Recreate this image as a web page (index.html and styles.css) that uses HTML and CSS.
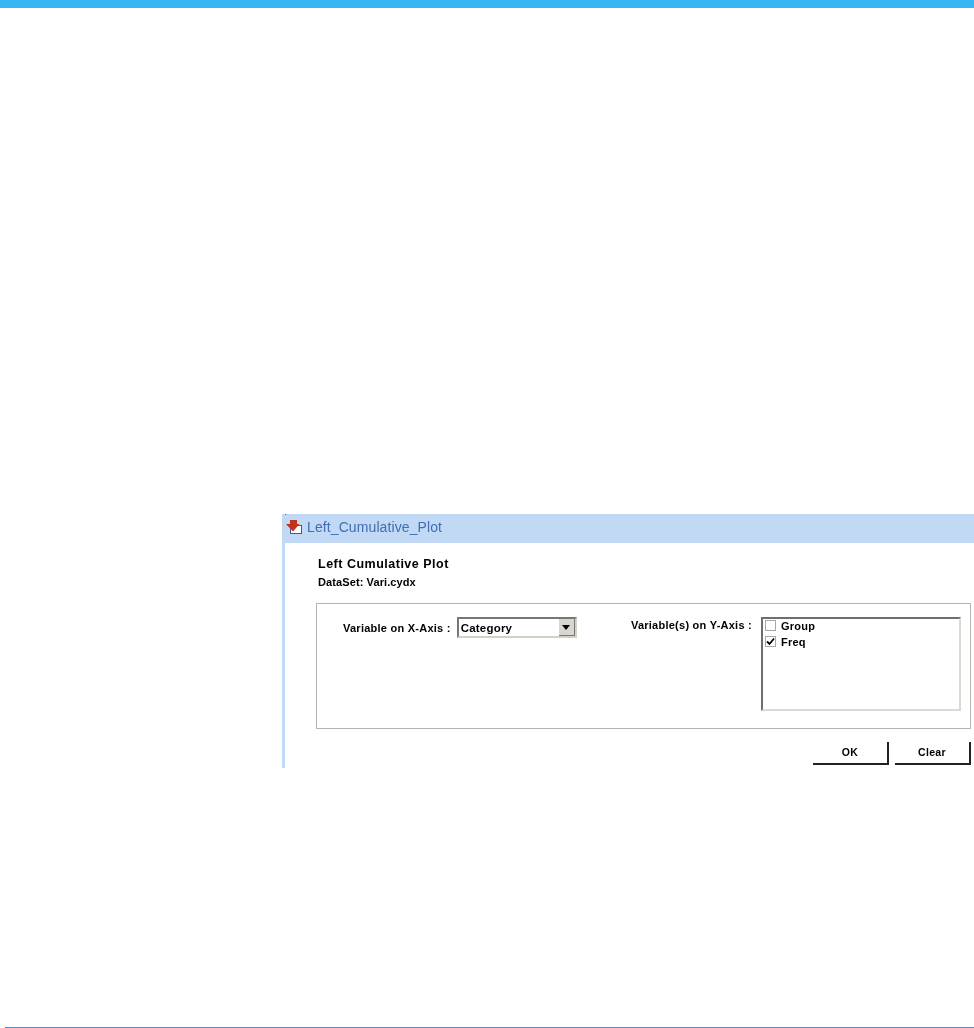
FILE: index.html
```html
<!DOCTYPE html>
<html lang="en">
<head>
<meta charset="utf-8">
<title>Left Cumulative Plot</title>
<link rel="stylesheet" href="styles.css">
</head>
<body>
<div class="page">
  <div class="top-bar"></div>
  <main class="content">
    <section class="window">
      <span class="corner"></span>
      <header class="titlebar">
        <svg class="app-icon" width="16" height="14" viewBox="0 0 16 14">
          <rect x="4.500" y="5.500" width="11" height="8" fill="#fff" stroke="#3a5c94" stroke-width="1"/>
          <path d="M4 0h7v4h2.500L7 11.500 0 4h4z" fill="#c0301c"/>
        </svg>
        <span class="title-text">Left_Cumulative_Plot</span>
      </header>
      <div class="body">
        <h1 class="heading">Left Cumulative Plot</h1>
        <p class="dataset">DataSet: Vari.cydx</p>
        <div class="group">
          <div class="x-field">
            <span class="label">Variable on X-Axis :</span>
            <div class="select">
              <span class="select-value">Category</span>
              <span class="select-btn"><svg width="8" height="5" viewBox="0 0 8 5"><path d="M0 0h8L4 5z" fill="#000"/></svg></span>
            </div>
          </div>
          <div class="y-field">
            <span class="label">Variable(s) on Y-Axis :</span>
            <div class="listbox">
              <div class="item"><span class="check"></span><span class="label">Group</span></div>
              <div class="item"><span class="check"><svg width="9" height="9" viewBox="0 0 9 9"><path d="M1 4.500l2.500 2.500L8 1.500" fill="none" stroke="#000" stroke-width="1.800"/></svg></span><span class="label">Freq</span></div>
            </div>
          </div>
        </div>
        <div class="actions">
          <div class="btn">OK</div>
          <div class="btn">Clear</div>
        </div>
      </div>
    </section>
  </main>
  <div class="bottom-rule"></div>
</div>
</body>
</html>
```

FILE: styles.css
```css
* { box-sizing: border-box; }
html, body { margin: 0; padding: 0; background: #fff; overflow: hidden; }
.page {
  height: 1028px;
  display: flex;
  flex-direction: column;
  font-family: "Liberation Sans", Arial, sans-serif;
  color: #000;
}
.top-bar { height: 8px; background: #35b8f2; flex: none; }
.content { flex: 1; padding: 506px 0 0 282px; overflow: hidden; }
.window {
  position: relative;
  width: 692px;
  height: 254px;
  border-left: 3px solid #c2d9f5;
  overflow: hidden;
}
.corner {
  position: absolute;
  left: -3px;
  top: 0;
  width: 4px;
  height: 4px;
  border-left: 1px solid #3a5c94;
  border-top: 1px solid #3a5c94;
}
.titlebar {
  height: 29px;
  margin-left: -3px;
  padding: 3px 0 0 4px;
  background: #c2d9f5;
  display: flex;
  align-items: flex-start;
  gap: 5px;
}
.app-icon { flex: none; margin-top: 3px; }
.title-text { font-size: 14px; line-height: 20px; color: #3f6eb5; letter-spacing: 0.1px; filter: blur(0.25px); }
.body { padding: 13px 0 0 31px; filter: blur(0.3px); }
.heading { margin: 0 0 0 2px; font-size: 12.500px; line-height: 16px; font-weight: 700; letter-spacing: 0.5px; }
.dataset { margin: 4px 0 0 2px; font-size: 11px; line-height: 12px; font-weight: 700; letter-spacing: 0.1px; }
.group {
  margin: 15px 0 0;
  width: 655px;
  height: 126px;
  border: 1px solid #b4b4b0;
  display: flex;
  padding: 13px 9px 0 26px;
  justify-content: space-between;
  align-items: flex-start;
}
.label { font-size: 11px; line-height: 12px; font-weight: 700; letter-spacing: 0.25px; white-space: nowrap; }
.x-field { display: flex; align-items: center; gap: 6px; }
.y-field { display: flex; align-items: flex-start; gap: 9px; }
.y-field > .label { margin-top: 2px; }
.select {
  width: 120px;
  height: 21px;
  border: 2px solid;
  border-color: #777 #d4d0c8 #d4d0c8 #777;
  display: flex;
  align-items: center;
  justify-content: space-between;
  padding-left: 2px;
  background: #fff;
}
.select-value { font-size: 11.500px; font-weight: 700; letter-spacing: 0.2px; }
.select-btn {
  width: 16px;
  height: 17px;
  background: #d8d6ce;
  border-right: 1px solid #777;
  border-bottom: 1px solid #777;
  display: flex;
  align-items: center;
  justify-content: center;
}
.listbox {
  width: 200px;
  height: 94px;
  border: 2px solid;
  border-color: #6e6e6a #dcdad0 #dcdad0 #6e6e6a;
  padding: 0 0 0 2px;
  display: flex;
  flex-direction: column;
  gap: 3px;
  background: #fff;
}
.item { display: flex; align-items: center; gap: 5px; height: 13px; }
.check {
  width: 11px;
  height: 11px;
  border: 1px solid #a8a8a4;
  display: flex;
  align-items: center;
  justify-content: center;
  flex: none;
}
.actions { display: flex; justify-content: flex-end; gap: 6px; margin-top: 13px; width: 655px; }
.btn {
  width: 76px;
  height: 23px;
  padding-bottom: 2px;
  border-right: 2px solid #222;
  border-bottom: 2px solid #222;
  font-size: 10.500px;
  font-weight: 700;
  letter-spacing: 0.3px;
  display: flex;
  align-items: center;
  justify-content: center;
}
.bottom-rule { height: 1px; margin-left: 5px; background: #2aa6df; flex: none; }
```
